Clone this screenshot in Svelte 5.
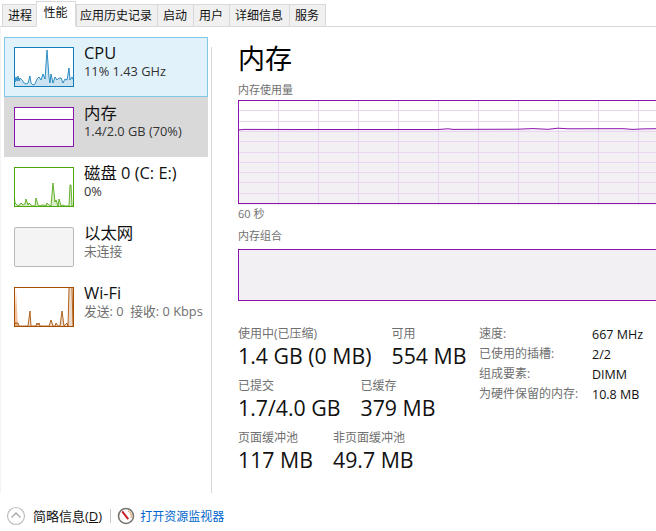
<script>
    const tabs = ['进程', '性能', '应用历史记录', '启动', '用户', '详细信息', '服务'];

    const toLine = (pts) => pts.map((p) => p.join(',')).join(' ');
    const toArea = (pts) => `0,40 ${toLine(pts)} 60,40`;

    const cpuPts = [[0,31],[1,35],[2,30],[3,34],[4,29],[5,34],[6,31],[8,33],[10,36],[12,37],[14,36],[16,29],[17,36],[19,38],[21,37],[23,32],[25,30],[27,33],[28,30],[29,27],[31,32],[33,3],[35,30],[36,36],[37,27],[39,36],[41,30],[43,33],[45,31],[47,31],[49,36],[51,32],[53,33],[55,21],[56,33],[58,30],[60,34]];
    const diskPts = [[0,26],[1,36],[3,38],[5,39],[7,36],[9,38],[11,37],[12,32],[14,38],[15,36],[17,38],[19,39],[21,39],[22,31],[24,38],[26,39],[28,38],[30,38],[32,39],[33,36],[35,38],[37,39],[39,16],[41,35],[42,33],[44,39],[45,32],[47,39],[49,38],[51,39],[53,39],[55,39],[56,18],[57,18],[58,39],[60,39]];
    const wifiPts = [[0,39],[1,36],[2,36],[3,36],[4,36],[5,39],[14,39],[16,24],[17,39],[22,39],[23,36],[24,38],[25,36],[26,39],[35,39],[37,33],[39,39],[41,39],[42,36],[44,39],[46,39],[48,24],[50,39],[53,36],[54,39],[55,0],[58,0],[59,39],[60,39]];

    const sidebar = [
        { name: 'CPU', sub: '11% 1.43 GHz', kind: 'cpu', pts: cpuPts, active: true },
        { name: '内存', sub: '1.4/2.0 GB (70%)', kind: 'mem', current: true },
        { name: '磁盘 0 (C: E:)', sub: '0%', kind: 'disk', pts: diskPts },
        { name: '以太网', sub: '未连接', kind: 'off', muted: true },
        { name: 'Wi-Fi', sub: '发送: 0  接收: 0 Kbps', kind: 'wifi', pts: wifiPts, muted: true, ghost: '0,40 2,3 4,40' }
    ];

    const statRows = [
        [{ label: '使用中(已压缩)', value: '1.4 GB (0 MB)' }, { label: '可用', value: '554 MB' }],
        [{ label: '已提交', value: '1.7/4.0 GB' }, { label: '已缓存', value: '379 MB' }],
        [{ label: '页面缓冲池', value: '117 MB' }, { label: '非页面缓冲池', value: '49.7 MB' }]
    ];

    const specs = [
        ['速度:', '667 MHz'],
        ['已使用的插槽:', '2/2'],
        ['组成要素:', 'DIMM'],
        ['为硬件保留的内存:', '10.8 MB']
    ];

    const vLines = Array.from({ length: 10 }, (_, i) => 40.5 + i * 40);
    const hLines = Array.from({ length: 9 }, (_, i) => Math.round(10.3 * (i + 1)) + 0.5);
</script>

<div class="window">
    <nav class="tabs">
        {#each tabs as tab, i}
            <div class="tab" class:selected={i === 1} class:wide={i === 2}>{tab}</div>
        {/each}
    </nav>

    <main class="body">
        <aside class="sidebar">
            <div class="list">
                {#each sidebar as item}
                    <div class="item" class:active={item.active} class:current={item.current}>
                        <div class="thumb {item.kind}">
                            {#if item.pts}
                                <svg width="58" height="38" viewBox="1 1 58 38" preserveAspectRatio="none">
                                    {#if item.ghost}
                                        <polygon class="ghost" points={item.ghost} />
                                    {/if}
                                    <polygon class="area" points={toArea(item.pts)} />
                                    <polyline class="line" points={toLine(item.pts)} />
                                </svg>
                            {:else if item.kind === 'mem'}
                                <div class="mem-free"></div>
                                <div class="mem-used"></div>
                            {/if}
                        </div>
                        <div class="info">
                            <div class="name">{item.name}</div>
                            <div class="sub" class:muted={item.muted}>{item.sub}</div>
                        </div>
                    </div>
                {/each}
            </div>
        </aside>

        <section class="detail">
            <h1>内存</h1>
            <div class="caption small usage">内存使用量</div>
            <svg class="chart" width="420" height="105" viewBox="0 0 420 105">
                <rect x="0" y="30" width="420" height="75" fill="#f3f0f4" />
                {#each hLines as y}
                    <line class="grid" x1="0" x2="420" y1={y} y2={y} />
                {/each}
                {#each vLines as x}
                    <line class="grid" x1={x} x2={x} y1="0" y2="105" />
                {/each}
                <polyline class="mem-line" points="0,30 6,29.4 60,29.5 125,29.5 200,29.5 210,28.8 215,29.4 280,29.2 295,28.6 310,29.3 320,28.2 330,28.8 385,28.7 395,29.4 405,28.9 420,28.7" />
                <rect class="frame" x="0.5" y="0.5" width="430" height="103" />
            </svg>
            <div class="caption small secs">60 秒</div>
            <div class="caption small combo">内存组合</div>
            <div class="composition"></div>

            <div class="stats">
                <div class="stat-rows">
                    {#each statRows as row}
                        <div class="stat-row">
                            {#each row as stat}
                                <div>
                                    <div class="caption">{stat.label}</div>
                                    <div class="value">{stat.value}</div>
                                </div>
                            {/each}
                        </div>
                    {/each}
                </div>
                <div class="specs">
                    {#each specs as [k, v]}
                        <div class="caption">{k}</div>
                        <div class="spec-value">{v}</div>
                    {/each}
                </div>
            </div>
        </section>
    </main>

    <footer class="footer">
        <svg class="chevron" width="20" height="20" viewBox="0 0 20 20">
            <circle cx="10" cy="10" r="8.5" fill="#fff" stroke="#bdbdbd" stroke-width="1.2" />
            <path d="M5.500 11.500L10 7l4.500 4.500" fill="none" stroke="#a6a6a6" stroke-width="1.300" />
        </svg>
        <span class="less">简略信息(<u>D</u>)</span>
        <span class="divider"></span>
        <svg class="gauge" width="18" height="18" viewBox="0 0 18 18">
            <circle cx="9" cy="9" r="7.500" fill="#fff" stroke="#77736e" stroke-width="1.600" />
            <path d="M11 3.800a5.600 5.600 0 0 1 2.800 7.500" fill="none" stroke="#e0b080" stroke-width="1.300" />
            <path d="M5.200 4.400L11.200 12.200" stroke="#c8202a" stroke-width="2" />
        </svg>
        <span class="link">打开资源监视器</span>
    </footer>
</div>

<style>
    :global(body) {
        margin: 0;
        background: #fff;
        overflow: hidden;
    }

    .window {
        width: 656px;
        height: 531px;
        overflow: hidden;
        display: flex;
        flex-direction: column;
        font-family: "Open Sans", "Noto Sans CJK SC", sans-serif;
        color: #111;
    }

    .tabs {
        display: flex;
        align-items: flex-end;
        height: 27px;
        padding-left: 1.500px;
        box-sizing: border-box;
        border-bottom: 1px solid #d9d9d9;
        flex-shrink: 0;
    }

    .tab {
        height: 23px;
        line-height: 22px;
        padding: 0 5.500px;
        margin-bottom: -1px;
        margin-right: -1px;
        box-sizing: border-box;
        border: 1px solid #d9d9d9;
        background: #f0f0f0;
        font-size: 12px;
        color: #111;
        white-space: nowrap;
    }

    .tab.wide {
        padding: 0 4.500px 0 3.500px;
    }

    .tab.selected {
        position: relative;
        height: 26px;
        padding: 0 7px;
        margin: 0 0 -1px -2px;
        line-height: 22px;
        background: #fff;
        border-bottom-color: #fff;
    }

    .body {
        flex: 1;
        display: flex;
        min-height: 0;
        border-left: 1px solid #f4f4f4;
    }

    .sidebar {
        width: 211px;
        box-sizing: border-box;
        padding: 10px 0 0 3px;
        flex-shrink: 0;
        display: flex;
        align-items: stretch;
        position: relative;
    }

    .sidebar::after {
        content: "";
        position: absolute;
        right: 0;
        top: 20px;
        bottom: 0;
        width: 1px;
        background: #d6d6d6;
    }

    .list {
        width: 204px;
    }

    .item {
        height: 60px;
        box-sizing: border-box;
        display: flex;
        align-items: flex-start;
        padding: 10px 0 0 10px;
    }

    .item.active {
        background: #e2f2fa;
        border: 1px solid #7fc7e8;
        padding: 9px 0 0 9px;
    }

    .item.current {
        background: #d9d9d9;
    }

    .thumb {
        width: 60px;
        height: 40px;
        box-sizing: border-box;
        border: 1px solid;
        flex-shrink: 0;
        display: flex;
        flex-direction: column;
        background: #fff;
        overflow: hidden;
    }

    .thumb svg {
        display: block;
    }

    .area {
        stroke: none;
        opacity: 0.22;
    }

    .ghost {
        fill: #f0a878;
        opacity: 0.7;
    }

    .line {
        fill: none;
        stroke-width: 1;
        stroke-opacity: 0.85;
    }

    .cpu {
        border-color: #117dbb;
    }

    .cpu .area {
        fill: #117dbb;
    }

    .cpu .line {
        stroke: #117dbb;
    }

    .mem {
        border-color: #8b12ae;
    }

    .mem-free {
        height: 11px;
        border-bottom: 1px solid #8b12ae;
        background: #fff;
    }

    .mem-used {
        flex: 1;
        background: #f4f2f4;
    }

    .disk {
        border-color: #4da60c;
    }

    .disk .area {
        fill: #4da60c;
    }

    .disk .line {
        stroke: #4da60c;
    }

    .off {
        border-color: #b8b8b8;
        background: #f4f4f4;
        border-radius: 2px;
    }

    .wifi {
        border-color: #a74f01;
    }

    .wifi .area {
        fill: #a74f01;
    }

    .wifi .line {
        stroke: #a74f01;
    }

    .info {
        margin-left: 10px;
        margin-top: -5px;
    }

    .name {
        font-size: 16.400px;
        line-height: 22px;
        white-space: nowrap;
    }

    .sub {
        font-size: 12.800px;
        line-height: 15px;
        white-space: pre;
        color: #333;
    }

    .sub.muted {
        color: #707070;
    }

    .detail {
        flex: 1;
        min-width: 0;
        padding: 14px 0 0 26px;
    }

    h1 {
        margin: 0;
        font-size: 27px;
        line-height: 36px;
        font-weight: 400;
        color: #000;
    }

    .caption {
        font-size: 12px;
        line-height: 16px;
        color: #707070;
        white-space: nowrap;
    }

    .caption.small {
        font-size: 11px;
    }

    .usage {
        margin-top: 5px;
    }

    .chart {
        display: block;
        margin-top: 2px;
    }

    .grid {
        stroke: #ead6f2;
        stroke-width: 1;
    }

    .mem-line {
        fill: none;
        stroke: #8b12ae;
        stroke-width: 1;
    }

    .frame {
        fill: none;
        stroke: #8b12ae;
        stroke-width: 1;
    }

    .secs {
        margin-top: 1px;
    }

    .combo {
        margin-top: 6px;
    }

    .composition {
        width: 430px;
        height: 52px;
        margin-top: 5px;
        box-sizing: border-box;
        border: 1px solid #8b12ae;
        background: #f3f0f4;
    }

    .stats {
        display: flex;
        margin-top: 25px;
    }

    .stat-rows {
        width: 241px;
        flex-shrink: 0;
    }

    .stat-row {
        display: flex;
        gap: 20px;
        margin-bottom: 8px;
    }

    .value {
        font-size: 21.300px;
        line-height: 28px;
        white-space: nowrap;
    }

    .specs {
        display: grid;
        grid-template-columns: 113px 1fr;
        grid-auto-rows: 20px;
        align-items: center;
        margin-top: -2px;
        align-self: flex-start;
    }

    .spec-value {
        font-size: 12.500px;
        white-space: nowrap;
    }

    .footer {
        height: 38px;
        flex-shrink: 0;
        display: flex;
        align-items: center;
        padding: 7px 0 0 6px;
        box-sizing: border-box;
    }

    .chevron {
        flex-shrink: 0;
    }

    .less {
        margin-left: 7px;
        font-size: 13px;
        color: #111;
        white-space: nowrap;
    }

    .divider {
        width: 1px;
        height: 14px;
        margin: 0 6px 0 8px;
        background: #c8c8c8;
    }

    .gauge {
        flex-shrink: 0;
    }

    .link {
        margin-left: 5px;
        font-size: 12px;
        color: #0066cc;
        white-space: nowrap;
    }
</style>
